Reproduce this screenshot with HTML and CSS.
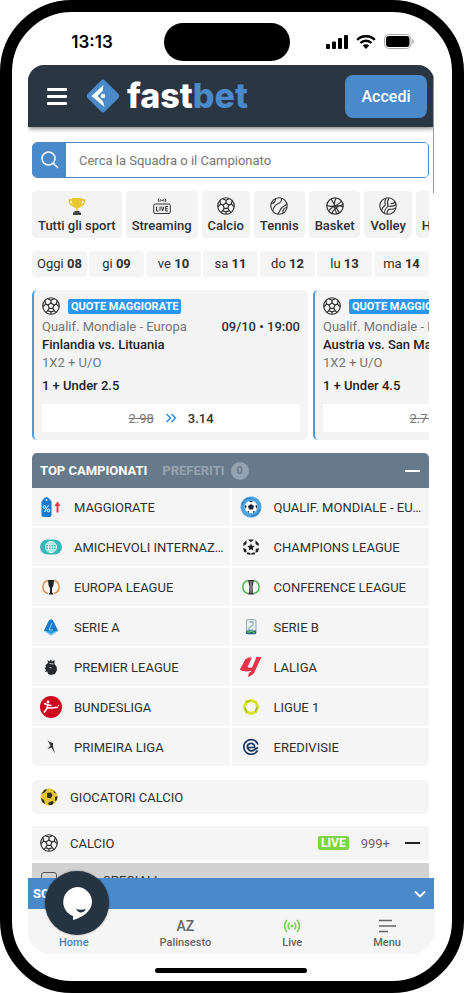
FILE: index.html
```html
<!DOCTYPE html>
<html lang="it">
<head>
    <meta charset="UTF-8">
    <meta name="viewport" content="width=device-width, initial-scale=1.0">
    <title>Fastbet - Scommesse sportive</title>
    <link rel="stylesheet" href="styles.css">
</head>
<body>
    <!-- Shared icons -->
    <svg class="sprite" aria-hidden="true">
        <symbol id="ball" viewBox="0 0 24 24">
            <g fill="none" stroke="currentColor" stroke-width="1.6" stroke-linejoin="round">
                <circle cx="12" cy="12" r="11"/>
                <path d="M12 8l3.800 2.800-1.400 4.400H9.600l-1.400-4.400z"/>
                <path d="M12 8V4.300M15.800 10.800l3.400-1.300M14.400 15.200l2.200 3.200M9.600 15.200l-2.200 3.200M8.200 10.800L4.800 9.500"/>
                <path d="M7.500 2.200L12 4.300l4.500-2.100M20.200 4.600l-1 4.900 3.600 3.600M18.800 20.600l-2.200-2.200-4.600 1.400v3M5.200 20.600l2.200-2.200 4.600 1.400M3.800 4.600l1 4.900-3.600 3.600"/>
            </g>
        </symbol>
        <symbol id="arrows" viewBox="0 0 12 10">
            <path d="M1.500 1l4 4-4 4M6.500 1l4 4-4 4" fill="none" stroke="#2f8fe6" stroke-width="1.500"/>
        </symbol>
    </svg>

    <div class="phone">
        <div class="status-bar">
            <span class="time">13:13</span>
            <span class="island"></span>
            <div class="status-icons">
                <svg width="22" height="14" viewBox="0 0 22 14"><rect y="9" width="4" height="5" rx="1"/><rect x="6" y="6.500" width="4" height="7.500" rx="1"/><rect x="12" y="3" width="4" height="11" rx="1"/><rect x="18" width="4" height="14" rx="1"/></svg>
                <svg width="20" height="14" viewBox="0 0 20 14"><path d="M1.200 4.800a12.500 12.500 0 0 1 17.600 0M4.400 8a8 8 0 0 1 11.200 0" fill="none" stroke="#000" stroke-width="2.400"/><path d="M10 14l-3.300-3.400a4.700 4.700 0 0 1 6.600 0z"/></svg>
                <svg width="30" height="15" viewBox="0 0 30 15"><rect x=".5" y=".5" width="26.500" height="14" rx="4.500" fill="none" stroke="#aaa"/><rect x="2" y="2" width="23.500" height="11" rx="3"/><path d="M28.200 5v5c2-.8 2-4.200 0-5z" fill="#aaa"/></svg>
            </div>
        </div>

        <div class="screen">
            <header class="header">
                <button class="menu-btn" aria-label="Apri menu"><span></span><span></span><span></span></button>
                <a class="logo" href="#">
                    <svg width="34" height="34" viewBox="0 0 34 34"><path d="M15 1.500q2-2 4 0l13 13q2.500 2.500 0 5l-13 13q-2 2-4 0l-13-13q-2.500-2.500 0-5z" fill="#4a89ca"/><path d="M17.500 6L5.500 17l13 11-1.500-5.500L11.500 17l5-5z" fill="#fff"/><circle cx="17" cy="17" r="2.300" fill="#fff"/></svg>
                    <span>fast<b>bet</b></span>
                </a>
                <button class="login-btn">Accedi</button>
                <span class="scroll-thumb"></span>
            </header>

            <main class="content">
                <form class="search">
                    <button type="button" aria-label="Cerca"><svg width="18" height="18" viewBox="0 0 18 18" fill="none" stroke="#fff" stroke-width="1.500"><circle cx="7.500" cy="7.500" r="6.500"/><path d="M12.300 12.300L17 17"/></svg></button>
                    <input type="text" aria-label="Cerca" placeholder="Cerca la Squadra o il Campionato">
                </form>

                <nav class="sports">
                    <a href="#"><svg width="18" height="18" viewBox="0 0 18 18"><path d="M4.500 3H1.200q0 5 5 6M13.500 3h3.300q0 5-5 6" fill="none" stroke="#d9bb2b" stroke-width="1.300"/><path d="M4 1h10v4.500c0 3.500-2.300 5.500-4.200 6v2.500H8.200v-2.500C6.300 11 4 9 4 5.500z" fill="#e8c92d"/><path d="M6.500 14h5v1.500h1.500V18H5v-2.500h1.500z" fill="#444"/></svg>Tutti gli sport</a>
                    <a href="#"><svg width="18" height="18" viewBox="0 0 18 18" fill="none" stroke="#333"><rect x=".7" y="7" width="16.600" height="9.500" rx="1.500"/><path d="M6 1.500q-1.500 1.500 0 3.500M12 1.500q1.500 1.500 0 3.500M7.500 2.300q-.6 1 0 2M10.500 2.300q.6 1 0 2"/><circle cx="9" cy="3.300" r=".4"/><path d="M3.500 9.500v4.500h2M7 9.500V14M8.500 9.500L9.700 14l1.200-4.500M15 9.500h-2.300V14H15M12.700 11.700h2"/></svg>Streaming</a>
                    <a href="#"><svg width="18" height="18"><use href="#ball"/></svg>Calcio</a>
                    <a href="#"><svg width="18" height="18" viewBox="0 0 18 18" fill="none" stroke="#333" stroke-width="1.100"><circle cx="9" cy="9" r="8.200"/><path d="M11.500 1.200c.5 3.500-1 4.800-4 5.800S3.500 10.500 2.700 14M1.200 6.500c2.500.2 4-1.500 4.500-4.800M16.800 6.500c-1.300 2.500-3 2.500-4.800 4s-2 3.500-4 6.500M17 10.500c-2.800 0-4.300 2.300-4.300 5.600"/></svg>Tennis</a>
                    <a href="#"><svg width="18" height="18" viewBox="0 0 18 18" fill="none" stroke="#333" stroke-width="1.200"><circle cx="9" cy="9" r="8.200"/><path d="M5 1.800l8.500 14.300M1 8.500c5 2 11 .5 14.500-4.500M10 1c-3 6-2 11 1 16M2.500 14C7 8 12 7.500 17 10M6 16.500c1-5 5-7 11-9"/></svg>Basket</a>
                    <a href="#"><svg width="18" height="18" viewBox="0 0 18 18" fill="none" stroke="#333" stroke-width="1.100"><circle cx="9" cy="9" r="8.200"/><path d="M9 9c-1-3-.5-5.500 1-8M9 9c3 .7 5.500.5 8-1.500M9 9c-2 2.500-4 4.500-4 7.300M6.500 8C5.500 5.500 5.800 3.200 7 1.200M6.500 8C4.500 9.500 2.500 12 2.700 14M11.500 6.500c2 .3 3.800-.3 5-1.500M10 12c2 .5 5 0 6.500-1M10 12c-1.300 1.200-2 3-2 5"/></svg>Volley</a>
                    <a href="#"><svg width="18" height="18"></svg>Hockey</a>
                </nav>

                <nav class="days">
                    <a href="#">Oggi <b>08</b></a>
                    <a href="#">gi <b>09</b></a>
                    <a href="#">ve <b>10</b></a>
                    <a href="#">sa <b>11</b></a>
                    <a href="#">do <b>12</b></a>
                    <a href="#">lu <b>13</b></a>
                    <a href="#">ma <b>14</b></a>
                </nav>

                <section class="promos">
                    <article class="promo">
                        <div class="promo-tag"><svg width="18" height="18"><use href="#ball"/></svg><span>QUOTE MAGGIORATE</span></div>
                        <div class="promo-info"><span class="muted">Qualif. Mondiale - Europa</span><time>09/10 • 19:00</time></div>
                        <strong>Finlandia vs. Lituania</strong>
                        <span class="muted">1X2 + U/O</span>
                        <strong class="pick">1 + Under 2.5</strong>
                        <button class="odds"><s>2.98</s><svg width="12" height="10"><use href="#arrows"/></svg>3.14</button>
                    </article>
                    <article class="promo">
                        <div class="promo-tag"><svg width="18" height="18"><use href="#ball"/></svg><span>QUOTE MAGGIORATE</span></div>
                        <div class="promo-info"><span class="muted">Qualif. Mondiale - Europa</span><time>09/10 • 20:45</time></div>
                        <strong>Austria vs. San Marino</strong>
                        <span class="muted">1X2 + U/O</span>
                        <strong class="pick">1 + Under 4.5</strong>
                        <button class="odds"><s>2.71</s><svg width="12" height="10"><use href="#arrows"/></svg>2.90</button>
                    </article>
                </section>

                <section class="leagues">
                    <div class="leagues-head">
                        <button class="tab active">TOP CAMPIONATI</button>
                        <button class="tab">PREFERITI <span>0</span></button>
                        <button class="minus" aria-label="Chiudi"></button>
                    </div>
                    <div class="league-grid">
                        <a href="#"><svg viewBox="0 0 22 22"><path d="M1.500 5.500L4 2.500Q6.500-.5 9 2.500l2.500 3V19q0 2-2 2h-6q-2 0-2-2z" fill="#187bd0"/><circle cx="6.500" cy="4" r="1" fill="#f5f5f5"/><path d="M8.500 9l-4 7" stroke="#fff"/><circle cx="4.500" cy="11" r="1.300" fill="none" stroke="#fff"/><circle cx="8.500" cy="14.500" r="1.300" fill="none" stroke="#fff"/><path d="M17.500 5.500l3 4.500h-2v6.500h-2V10h-2z" fill="#ee3545"/></svg><span>MAGGIORATE</span></a>
                        <a href="#"><svg viewBox="0 0 22 22"><circle cx="11" cy="11" r="10.500" fill="#4aa3e0"/><path d="M2 9q2-7 9-7M20 13q-2 7-9 7" fill="none" stroke="#2773b5"/><circle cx="11" cy="11" r="6.300" fill="#fff"/><path d="M11 8l3 2-1 3.500H9L8 10zM9 5h4l-2 1.500zM17 9l-1.800 1L17 13zM5 9l1.800 1L5 13zM7 15.500l2-.5v2zM15 15.500l-2-.5v2z" fill="#182638"/></svg><span>QUALIF. MONDIALE - EUROPA</span></a>
                        <a href="#"><svg viewBox="0 0 22 22"><rect y="3.500" width="22" height="15" rx="7.500" fill="#36b8b9"/><g fill="none" stroke="#fff" stroke-width=".9"><circle cx="11" cy="11" r="5.500"/><ellipse cx="11" cy="11" rx="2.600" ry="5.500"/><path d="M5.500 11h11M6.500 8.200h9M6.500 13.800h9M11 5.500v11"/></g></svg><span>AMICHEVOLI INTERNAZIONALI</span></a>
                        <a href="#"><svg viewBox="0 0 22 22"><g fill="#222"><path d="M11 7.500l1.100 2.300 2.600.3-1.900 1.800.5 2.600-2.300-1.200-2.300 1.200.5-2.600-1.900-1.800 2.600-.3zM8 3.500h6l-3 2.700zM15.500 4.200l3.300 3.300-.3 2.500-3-2zM6.500 4.200L3.200 7.500l.3 2.500 3-2zM19 12l-1 4-2.500.5.3-3.500zM3 12l1 4 2.500.5L6.200 13zM7.500 16.300l3 .7v2L6.700 18zM14.500 16.300l-3 .7v2l3.800-1z"/></g></svg><span>CHAMPIONS LEAGUE</span></a>
                        <a href="#"><svg viewBox="0 0 22 22"><path d="M8 4.500a6.700 6.700 0 0 0 0 13M14 4.500a6.700 6.700 0 0 1 0 13" fill="none" stroke="#d98e4a" stroke-width="1.500"/><path d="M8 4h6l-.7 6-1.300 2v4l1.500 2.500h-5L10 16v-4L8.700 10z" fill="#222"/></svg><span>EUROPA LEAGUE</span></a>
                        <a href="#"><svg viewBox="0 0 22 22"><path d="M8 4.500a6.700 6.700 0 0 0 0 13M14 4.500a6.700 6.700 0 0 1 0 13" fill="none" stroke="#48b64b" stroke-width="1.500"/><path d="M8 4h6l-1.500 7 .5 5 1 2.500H8L9 16l.5-5z" fill="#333"/><path d="M10 5l1 6-1 6M12 5l-1 6 1 6" fill="none" stroke="#bbb" stroke-width=".6"/></svg><span>CONFERENCE LEAGUE</span></a>
                        <a href="#"><svg viewBox="0 0 22 22"><path d="M11 3.500q2 0 3 3l4 8.500-7 4.500L4 15l4-8.500q1-3 3-3z" fill="#2698dd"/><path d="M11 3.500q2 0 3 3l4 8.500H4l4-8.500q1-3 3-3z" fill="#1c78c9"/><path d="M12 7l-3 7h4M5 15l6 3.500 6-3.500" fill="none" stroke="#8ed6f7"/></svg><span>SERIE A</span></a>
                        <a href="#"><svg viewBox="0 0 22 22"><rect x="6.500" y="3.500" width="9.500" height="14.500" rx="1.500" fill="#e9f1f3" stroke="#8ba9b8"/><path d="M9 6h4v3l-4 3v2h4" fill="none" stroke="#93b4c2" stroke-width="1.300"/><path d="M6 14.500h10V18H6z" fill="#246c7d"/><path d="M7 16h3l1-1 4 2" fill="none" stroke="#70d85a"/></svg><span>SERIE B</span></a>
                        <a href="#"><svg viewBox="0 0 22 22"><path d="M8 7L7.500 4l2 1.500L11 3.500l1 2 2.500-1.500v4l2 2.500.5 3.500-2 4-4 1-3-1-.5-2.500-2.500.5 1-2-1.500-2 1.500-1L5.500 9z" fill="#25282d"/><path d="M9.500 7.500l4 .5M9.500 11.500l2 .5" stroke="#f5f5f5" stroke-width=".8"/></svg><span>PREMIER LEAGUE</span></a>
                        <a href="#"><svg viewBox="0 0 22 22"><path d="M8.500 1.500h3.700L8 11.500l4 .3L16.500 1h5L15 15c-1 3-3 4.500-7 6l1-4.500 2-1.500C5 16 0 15 0 13L3.500 7l1.500-3.500z" fill="#e5344a"/><path d="M12.500 1.500L8 11M6 18l5-3" stroke="#f5f5f5"/></svg><span>LALIGA</span></a>
                        <a href="#"><svg viewBox="0 0 22 22"><circle cx="11" cy="11" r="11" fill="#cf081f"/><circle cx="8" cy="6" r="1.400" fill="#fff"/><path d="M4 7.500L8 9l-1.500 4-2.500 3.500M7.500 9l4 .5M7.500 12l4 0 6.500-.8" fill="none" stroke="#fff" stroke-width="1.600"/><circle cx="18.500" cy="9.500" r=".7" fill="#fff"/></svg><span>BUNDESLIGA</span></a>
                        <a href="#"><svg viewBox="0 0 22 22"><path d="M11 4.500l4.500 1.500 2.200 5-2.200 5-4.500 1.500L6.500 16l-2.200-5 2.200-5z" fill="none" stroke="#d6e32b" stroke-width="3"/><path d="M6 6l5-1.500M17 11l-1.500 4.500M5 12l2 4.500" stroke="#92b922" stroke-width="1.200"/></svg><span>LIGUE 1</span></a>
                        <a href="#"><svg viewBox="0 0 22 22"><path d="M7.500 4l2 2 3.500 1v3.500l2 7-3.500-6-4 1.500 3-3.500L9 7z" fill="#333"/></svg><span>PRIMEIRA LIGA</span></a>
                        <a href="#"><svg viewBox="0 0 22 22" fill="none" stroke="#173663" stroke-width="1.700"><path d="M17.500 14.500a7.300 7.300 0 1 1 .5-6"/><path d="M8 11.500h6.500c.5-3-1.500-4.200-3.500-4.200-2.500 0-4 2-3.500 4.500.7 2.700 4 4 6.500 2.200l4-2.500"/></svg><span>EREDIVISIE</span></a>
                    </div>
                </section>

                <a class="row players" href="#">
                    <svg width="18" height="18" viewBox="0 0 18 18"><circle cx="9" cy="9" r="8.500" fill="#e6c52e"/><path d="M7 5l4-.5 1.500 3-2 3L7 9.500zM1 6l2-2 1-2 3-1-1 2-2 2zM13 2l3.500 3.500-2-.5zM1 10l3 2 1 4-3-2zM8 15l4-2 2 1-2 3H9zM15 9l2.500-1-.5 4-2 1z" fill="#312e24"/></svg>
                    <span>GIOCATORI CALCIO</span>
                </a>

                <section class="sport-block">
                    <a class="row" href="#">
                        <svg width="18" height="18"><use href="#ball"/></svg>
                        <span>CALCIO</span>
                        <span class="live-tag">LIVE</span>
                        <span class="count">999+</span>
                        <span class="minus dark"></span>
                    </a>
                    <label class="special"><input type="checkbox"><span>SPECIALI</span></label>
                </section>
            </main>

            <button class="betslip"><b>SCHEDINA</b><svg width="12" height="8" viewBox="0 0 12 8"><path d="M1 1.500l5 5 5-5" fill="none" stroke="#fff" stroke-width="1.800"/></svg></button>

            <footer class="tabbar">
                <a href="#" class="current"><i></i>Home</a>
                <a href="#"><i class="az">AZ</i>Palinsesto</a>
                <a href="#"><i><svg width="18" height="14" viewBox="0 0 18 14" fill="none" stroke="#79d14c" stroke-width="1.600"><path d="M4 1q-5 6 0 12M14 1q5 6 0 12M6.500 3.500q-2.500 3.500 0 7M11.500 3.500q2.500 3.500 0 7"/><circle cx="9" cy="7" r=".7"/></svg></i>Live</a>
                <a href="#"><i><svg width="18" height="14" viewBox="0 0 18 14" stroke="#666" stroke-width="1.600"><path d="M1 1.500h13M1 7h17M1 12.500h9"/></svg></i>Menu</a>
                <button class="chat" aria-label="Chat"><svg width="64" height="64" viewBox="0 0 64 64"><path d="M32 16a15 15 0 0 1 15 15c0 9-10 16-19 18v-4A15 15 0 0 1 32 16z" fill="#fff"/><path d="M31 38q5 1.500 10 0-2 3.500-5 3.500T31 38z" fill="#263442"/></svg></button>
            </footer>
        </div>
        <div class="home-indicator"></div>
    </div>
</body>
</html>
```

FILE: styles.css
```css
* {
    box-sizing: border-box;
}
body {
    margin: 0;
    background: #fff;
    font-family: Roboto, "Liberation Sans", sans-serif;
    font-size: 13px;
    color: #303030;
}
a {
    color: inherit;
    text-decoration: none;
}
button {
    border: none;
    padding: 0;
    background: none;
    font-family: inherit;
    color: inherit;
    cursor: pointer;
}
svg {
    display: block;
    flex-shrink: 0;
}
.sprite {
    position: absolute;
    width: 0;
    height: 0;
}

/* Phone frame */
.phone {
    display: flex;
    flex-direction: column;
    height: 100vh;
    padding: 0 18px 0 16px;
    border: 12px solid #000;
    border-radius: 72px;
    background: #fff;
}
.status-bar {
    display: grid;
    grid-template-columns: 1fr 126px 1fr;
    align-items: center;
    height: 53px;
    padding: 6px 8px 0 0;
    flex-shrink: 0;
}
.time {
    padding-right: 8px;
    text-align: center;
    font: 600 17px Inter, sans-serif;
    color: #000;
}
.island {
    height: 38px;
    border-radius: 19px;
    background: #000;
}
.status-icons {
    display: flex;
    align-items: center;
    justify-content: flex-end;
    gap: 8px;
    padding-right: 12px;
}
.screen {
    display: flex;
    flex-direction: column;
    flex: 1;
    min-height: 0;
    overflow: hidden;
    border-radius: 16px 16px 22px 22px;
}
.home-indicator {
    flex-shrink: 0;
    width: 152px;
    height: 5px;
    margin: 14px auto 8px;
    border-radius: 3px;
    background: #000;
}

/* Header */
.header {
    position: relative;
    z-index: 1;
    display: flex;
    align-items: center;
    height: 62px;
    padding: 0 7px 0 19px;
    flex-shrink: 0;
    background: #2a3642;
    box-shadow: 0 1px 5px rgba(0,0,0,0.6);
}
.menu-btn {
    display: flex;
    flex-direction: column;
    gap: 4px;
    width: 20px;
}
.menu-btn span {
    height: 3px;
    border-radius: 1px;
    background: #fff;
}
.logo {
    display: flex;
    align-items: center;
    gap: 7px;
    margin-left: 19px;
    font: 800 34px/40px Inter, sans-serif;
    color: #fff;
}
.logo b {
    font-weight: 800;
    color: #4a89ca;
}
.login-btn {
    width: 82px;
    height: 43px;
    margin-left: auto;
    border-radius: 8px;
    background: #4a89ca;
    font-size: 16px;
    font-weight: 500;
    color: #fff;
}
.scroll-thumb {
    position: absolute;
    top: 0;
    right: 0;
    width: 1px;
    height: 128px;
    background: #999;
}

/* Content */
.content {
    flex: 1;
    min-height: 0;
    overflow: hidden;
    padding: 15px 5px 0 4px;
}
.search {
    display: flex;
    height: 36px;
    border: 1px solid #4a89ca;
    border-radius: 5px;
    overflow: hidden;
}
.search button {
    display: flex;
    align-items: center;
    justify-content: center;
    width: 33px;
    background: #4a89ca;
}
.search input {
    flex: 1;
    min-width: 0;
    border: none;
    outline: none;
    padding: 0 13px;
    font: 13px Roboto, sans-serif;
}
.search input::placeholder {
    color: #757575;
}
.sports {
    display: flex;
    gap: 4px;
    margin-top: 13px;
    overflow: hidden;
}
.sports a {
    display: flex;
    flex-direction: column;
    align-items: center;
    gap: 3px;
    height: 47px;
    padding: 6px 6px 0;
    flex-shrink: 0;
    border-radius: 4px;
    background: #f3f3f3;
    font-weight: 500;
    line-height: 16px;
}
.days {
    display: grid;
    grid-template-columns: repeat(7, 1fr);
    gap: 2px;
    margin-top: 13px;
}
.days a {
    border-radius: 3px;
    background: #f5f5f5;
    line-height: 26px;
    text-align: center;
    white-space: nowrap;
}
.promos {
    display: flex;
    gap: 5px;
    margin-top: 13px;
    overflow: hidden;
}
.promo {
    display: flex;
    flex-direction: column;
    width: 276px;
    height: 150px;
    padding: 7px 8px 8px;
    flex-shrink: 0;
    border-left: 2px solid #4c9bdc;
    border-radius: 5px;
    background: #f4f4f4;
    line-height: 18px;
}
.promo strong {
    font-weight: 500;
    color: #222;
}
.promo-tag {
    display: flex;
    align-items: center;
    gap: 8px;
    margin-bottom: 3px;
}
.promo-tag span {
    padding: 0 3px;
    border-radius: 2px;
    background: #2c95ee;
    font-size: 11px;
    font-weight: 700;
    line-height: 15px;
    color: #fff;
}
.promo-info {
    display: flex;
    justify-content: space-between;
}
.promo-info time {
    font-weight: 500;
}
.muted {
    color: #757575;
}
.promo .pick {
    margin-top: 5px;
}
.odds {
    display: flex;
    align-items: center;
    justify-content: center;
    gap: 11px;
    height: 28px;
    margin-top: auto;
    background: #fff;
    font-size: 13px;
    font-weight: 500;
}
.odds s {
    font-weight: 400;
    color: #777;
}

/* Leagues */
.leagues {
    margin-top: 13px;
    border-radius: 5px;
    overflow: hidden;
}
.leagues-head {
    display: flex;
    align-items: center;
    gap: 15px;
    height: 35px;
    padding: 0 9px 0 8px;
    background: #677a8b;
}
.tab {
    display: flex;
    align-items: center;
    gap: 6px;
    font-size: 13px;
    font-weight: 700;
    color: #96a3af;
}
.tab.active {
    color: #fff;
}
.tab span {
    width: 18px;
    border-radius: 9px;
    background: #95a3b0;
    font-size: 11px;
    line-height: 18px;
    color: #677a8b;
}
.minus {
    width: 15px;
    height: 2px;
    margin-left: auto;
    background: #fff;
}
.minus.dark {
    margin-left: 0;
    background: #222;
}
.league-grid {
    display: grid;
    grid-template-columns: 1fr 1fr;
    gap: 2px;
}
.league-grid a {
    display: flex;
    align-items: center;
    gap: 12px;
    min-width: 0;
    height: 38px;
    padding: 0 4px 0 8px;
    background: #f5f5f5;
}
.league-grid svg {
    width: 22px;
    height: 22px;
}
.league-grid span {
    overflow: hidden;
    text-overflow: ellipsis;
    white-space: nowrap;
}
.row {
    display: flex;
    align-items: center;
    gap: 12px;
    height: 34px;
    padding: 0 9px 0 8px;
    background: #f5f5f5;
}
.players {
    margin: 14px 0 12px;
    border-radius: 5px;
}
.live-tag {
    margin-left: auto;
    padding: 0 3px;
    border-radius: 2px;
    background: #7ed348;
    font-size: 12px;
    font-weight: 700;
    line-height: 14px;
    color: #fff;
}
.count {
    margin-right: 3px;
    color: #666;
}
.special {
    display: flex;
    align-items: center;
    gap: 46px;
    height: 34px;
    margin-top: 3px;
    padding-left: 9px;
    background: #d2d2d2;
}
.special input {
    appearance: none;
    width: 16px;
    height: 16px;
    margin: 0;
    border: 1px solid #555;
    border-radius: 3px;
}

/* Bottom bars */
.betslip {
    display: flex;
    align-items: center;
    justify-content: space-between;
    height: 31px;
    padding: 0 8px 0 5px;
    flex-shrink: 0;
    background: #4a89ca;
    font-size: 13px;
    color: #fff;
}
.tabbar {
    position: relative;
    display: flex;
    justify-content: space-between;
    height: 45px;
    padding: 10px 33px 0 31px;
    flex-shrink: 0;
    background: #f5f5f5;
    font-size: 11px;
    font-weight: 500;
    color: #666;
}
.tabbar a {
    display: flex;
    flex-direction: column;
    align-items: center;
    gap: 2px;
    line-height: 14px;
}
.tabbar i {
    height: 15px;
    font-style: normal;
}
.tabbar .az {
    font-size: 14px;
    line-height: 15px;
}
.tabbar .current {
    color: #3f83c5;
}
.chat {
    position: absolute;
    left: 17px;
    bottom: 19px;
    border-radius: 50%;
    background: #263442;
    box-shadow: 0 0 2px rgba(0,0,0,0.5);
}
```
